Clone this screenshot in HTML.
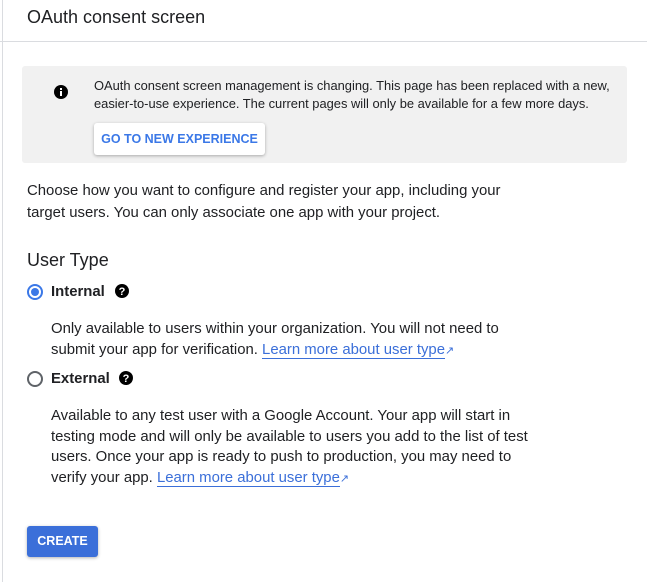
<!DOCTYPE html>
<html><head><meta charset="utf-8"><style>
*{margin:0;padding:0;box-sizing:border-box}
body{width:647px;height:582px;background:#fff;font-family:"Liberation Sans",Arial,sans-serif;color:#202124;position:relative;overflow:hidden}
.a{position:absolute;white-space:nowrap}
.vl{position:absolute;left:2px;top:0;width:1px;height:582px;background:#dadce0}
.hl{position:absolute;left:0;top:41px;width:647px;height:1px;background:#dadce0}
.t{font-size:14.9px}
a{color:#3b6fd9;text-decoration:none;border-bottom:1px solid #3b6fd9}
</style></head><body>
<div class="vl"></div><div class="hl"></div>
<div class="a" style="left:27px;top:7px;font-size:18px">OAuth consent screen</div>
<div class="a" style="left:22px;top:66px;width:605px;height:97px;background:#f1f1f1;border-radius:3px"></div>
<svg class="a" style="left:54px;top:85px" width="14" height="14" viewBox="0 0 14 14"><circle cx="7" cy="7" r="7" fill="#000"/><rect x="6" y="6" width="2" height="5" fill="#fff"/><rect x="6" y="3" width="2" height="2" fill="#fff"/></svg>
<div class="a" style="left:94px;top:77px;font-size:12.9px;line-height:18px">OAuth consent screen management is changing. This page has been replaced with a new,<br>easier-to-use experience. The current pages will only be available for a few more days.</div>
<div class="a" style="left:94px;top:123px;width:171px;height:32px;background:#fff;border-radius:3px;box-shadow:0 1px 3px rgba(0,0,0,.3);color:#3b78e7;font-size:12.5px;font-weight:bold;text-align:center;line-height:32px">GO TO NEW EXPERIENCE</div>
<div class="a t" style="left:27px;top:180px;line-height:22px">Choose how you want to configure and register your app, including your<br>target users. You can only associate one app with your project.</div>
<div class="a" style="left:27px;top:250px;font-size:18px">User Type</div>
<svg class="a" style="left:26px;top:283px" width="18" height="18"><circle cx="9" cy="9" r="7" fill="none" stroke="#3b78e7" stroke-width="2"/><circle cx="9" cy="9" r="4" fill="#3b78e7"/></svg>
<div class="a t" style="left:51px;top:284px;font-weight:bold">Internal</div>
<svg class="a" style="left:115px;top:284px" width="14" height="14" viewBox="0 0 14 14"><circle cx="7" cy="7" r="7" fill="#000"/><text x="7" y="11" font-size="11" font-weight="bold" fill="#fff" text-anchor="middle" font-family="Liberation Sans">?</text></svg>
<div class="a t" style="left:51px;top:319px;line-height:21px">Only available to users within your organization. You will not need to<br>submit your app for verification. <a>Learn more about user type</a><span style="color:#3b6fd9;font-size:11px">&#x2197;</span></div>
<svg class="a" style="left:26px;top:370px" width="18" height="18"><circle cx="9" cy="9" r="7" fill="none" stroke="#5f6368" stroke-width="2"/></svg>
<div class="a t" style="left:51px;top:371px;font-weight:bold">External</div>
<svg class="a" style="left:119px;top:371px" width="14" height="14" viewBox="0 0 14 14"><circle cx="7" cy="7" r="7" fill="#000"/><text x="7" y="11" font-size="11" font-weight="bold" fill="#fff" text-anchor="middle" font-family="Liberation Sans">?</text></svg>
<div class="a t" style="left:51px;top:406px;line-height:20.5px">Available to any test user with a Google Account. Your app will start in<br>testing mode and will only be available to users you add to the list of test<br>users. Once your app is ready to push to production, you may need to<br>verify your app. <a>Learn more about user type</a><span style="color:#3b6fd9;font-size:11px">&#x2197;</span></div>
<div class="a" style="left:27px;top:526px;width:71px;height:31px;background:#3b6fd9;border-radius:3px;box-shadow:0 1px 3px rgba(0,0,0,.3);color:#fff;font-size:12.5px;font-weight:bold;text-align:center;line-height:31px">CREATE</div>
</body></html>
